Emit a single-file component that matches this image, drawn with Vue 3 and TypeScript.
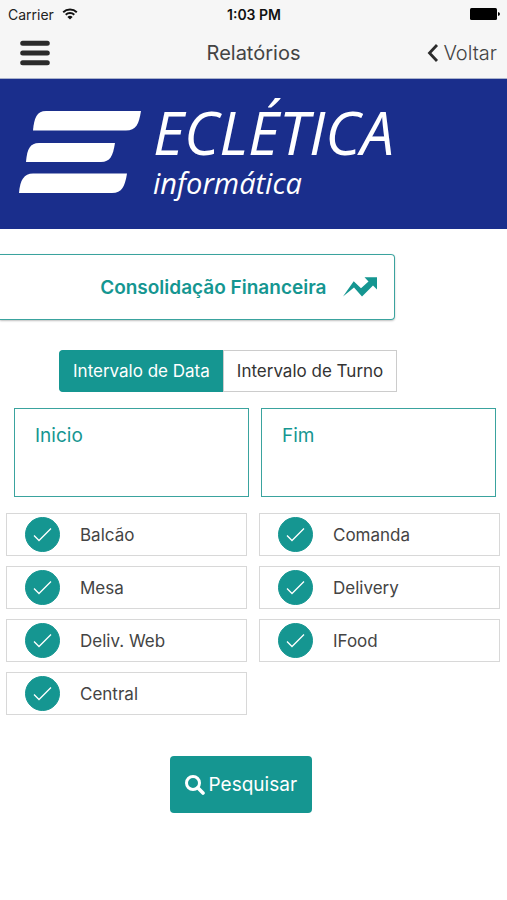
<script setup lang="ts">
import { ref } from 'vue'

interface Channel {
  id: string
  label: string
  checked: boolean
}

type Mode = 'data' | 'turno'

const mode = ref<Mode>('data')
const start = ref('')
const end = ref('')

const channels = ref<Channel[]>([
  { id: 'balcao', label: 'Balcão', checked: true },
  { id: 'comanda', label: 'Comanda', checked: true },
  { id: 'mesa', label: 'Mesa', checked: true },
  { id: 'delivery', label: 'Delivery', checked: true },
  { id: 'web', label: 'Deliv. Web', checked: true },
  { id: 'ifood', label: 'IFood', checked: true },
  { id: 'central', label: 'Central', checked: true },
])
</script>

<template>
  <div class="app">
    <header class="top">
      <div class="status">
        <span class="carrier">
          Carrier
          <svg class="wifi" viewBox="0 0 16 12" aria-hidden="true">
            <path d="M1.2 4.2a9.8 9.8 0 0 1 13.6 0M3.7 6.8a6.2 6.2 0 0 1 8.6 0" fill="none" stroke="#111" stroke-width="1.9" />
            <path d="M5.4 8.9a3.8 3.8 0 0 1 5.2 0L8 11.6z" fill="#111" />
          </svg>
        </span>
        <span class="clock">1:03 PM</span>
        <svg class="battery" viewBox="0 0 30 12" aria-hidden="true">
          <rect x="0" y="0" width="27" height="12" rx="1.5" fill="#000" />
          <path d="M28 4q2 .4 2 2t-2 2z" fill="#000" />
        </svg>
      </div>
      <nav class="bar">
        <button class="menu" type="button" aria-label="Menu">
          <svg viewBox="0 0 30 26" aria-hidden="true">
            <path d="M2.7 3.3h24.6M2.7 13h24.6M2.7 22.7h24.6" stroke="#2b2b2b" stroke-width="5" stroke-linecap="round" />
          </svg>
        </button>
        <h1 class="title">Relatórios</h1>
        <a class="back" href="#">
          <svg viewBox="0 0 12 20" aria-hidden="true">
            <path d="M10 2 2.5 10l7.500 8" fill="none" stroke="#2b2b2b" stroke-width="2.800" />
          </svg>
          Voltar
        </a>
      </nav>
    </header>

    <div class="banner">
      <svg class="mark" viewBox="0 0 122 84" aria-hidden="true">
        <g fill="#fff">
          <path d="M14 20.500C15 8 18 1 27 1H122C120 14 117 20.500 107 20.500Z" />
          <path d="M7 52C8 39 11 33 20 33H96C94 46 91 52 82 52Z" />
          <path d="M0 83C1 70 5 63.500 14 63.500H108C106 76 103 83 93 83Z" />
        </g>
      </svg>
      <div class="brand">
        <span class="name">ECLÉTICA</span>
        <span class="sub">informática</span>
      </div>
    </div>

    <main>
      <h2 class="report">
        Consolidação Financeira
        <svg viewBox="0 0 34 20" aria-hidden="true">
          <path d="M0 19.500 10.700 4.200 18 11.200 25.500 4.500 21.500 .2H34V12.500L30 8.500 19 19.500 11 10.500Z" fill="#159691" />
        </svg>
      </h2>

      <div class="modes">
        <div class="segment" role="group" aria-label="Intervalo">
          <button type="button" :class="{ on: mode === 'data' }" :aria-pressed="mode === 'data'" @click="mode = 'data'">Intervalo de Data</button>
          <button type="button" :class="{ on: mode === 'turno' }" :aria-pressed="mode === 'turno'" @click="mode = 'turno'">Intervalo de Turno</button>
        </div>
      </div>

      <div class="range">
        <div class="field">
          <label for="inicio">Inicio</label>
          <input id="inicio" v-model="start" type="text" />
        </div>
        <div class="field">
          <label for="fim">Fim</label>
          <input id="fim" v-model="end" type="text" />
        </div>
      </div>

      <div class="channels">
        <label v-for="c in channels" :key="c.id" class="channel" :for="c.id">
          <span class="tick">
            <input :id="c.id" v-model="c.checked" type="checkbox" />
            <svg viewBox="0 0 35 35" aria-hidden="true">
              <path d="M9 18.500 14 23.500 26 11.500" fill="none" stroke="#fff" stroke-width="1.300" />
            </svg>
          </span>
          {{ c.label }}
        </label>
      </div>

      <div class="actions">
        <button class="search" type="button">
          <svg viewBox="0 0 20 20" aria-hidden="true">
            <circle cx="8" cy="8" r="6.500" fill="none" stroke="#fff" stroke-width="3" />
            <path d="M12.800 12.800 18 18" stroke="#fff" stroke-width="3.600" stroke-linecap="round" />
          </svg>
          Pesquisar
        </button>
      </div>
    </main>
  </div>
</template>

<style>
body {
  background: #fff;
}
</style>

<style scoped>
.app {
  font-family: Inter, Roboto, "Liberation Sans", sans-serif;
  color: #444;
}

.app * {
  box-sizing: border-box;
}

svg {
  display: block;
  flex: none;
}

button,
input {
  font: inherit;
  margin: 0;
}

.top {
  background: #f6f6f6;
  border-bottom: 1px solid #a9b2cc;
}

.status {
  display: grid;
  grid-template-columns: 1fr auto 1fr;
  align-items: center;
  height: 28px;
  padding: 0 7px 0 8px;
  font-size: 14px;
  color: #222;
}

.carrier {
  display: flex;
  align-items: center;
  gap: 8px;
}

.wifi {
  width: 16px;
  height: 12px;
}

.clock {
  font-weight: 600;
  color: #111;
}

.battery {
  justify-self: end;
  width: 30px;
  height: 12px;
}

.bar {
  display: grid;
  grid-template-columns: 1fr auto 1fr;
  align-items: center;
  height: 50px;
  padding: 0 10px;
}

.menu {
  justify-self: start;
  padding: 0 10px;
  border: 0;
  background: none;
}

.menu svg {
  width: 30px;
  height: 26px;
}

.title {
  margin: 0;
  font-size: 20px;
  line-height: 26px;
  font-weight: 400;
  color: #444;
}

.back {
  justify-self: end;
  display: flex;
  align-items: center;
  gap: 4px;
  font-size: 20px;
  line-height: 26px;
  font-weight: 300;
  color: #444;
  text-decoration: none;
}

.back svg {
  width: 12px;
  height: 20px;
}

.banner {
  display: flex;
  align-items: flex-start;
  gap: 12px;
  height: 150px;
  padding: 18px 19px 0;
  background: #1a2e8c;
  color: #fff;
}

.mark {
  width: 122px;
  height: 84px;
  margin-top: 13px;
}

.brand {
  display: flex;
  flex-direction: column;
  font-family: "Open Sans", "Noto Sans", sans-serif;
  font-style: italic;
}

.name {
  font-size: 60px;
  line-height: 70px;
}

.sub {
  font-size: 29px;
  line-height: 32px;
}

.report {
  display: flex;
  align-items: center;
  justify-content: flex-end;
  gap: 17px;
  width: 78%;
  height: 66px;
  margin: 25px 0 0;
  padding-right: 17px;
  border: 1px solid #3aa39e;
  border-left: 0;
  border-radius: 0 4px 4px 0;
  box-shadow: 0 1px 2px rgba(0, 0, 0, 0.25);
  font-size: 19px;
  font-weight: 600;
  color: #159691;
}

.report svg {
  width: 34px;
  height: 20px;
}

.modes {
  display: flex;
  justify-content: center;
  width: 90%;
  margin-top: 30px;
}

.segment {
  display: flex;
}

.segment button {
  height: 42px;
  padding: 0 13px;
  border: 1px solid #ccc;
  background: #fff;
  font-size: 17px;
  color: #333;
}

.segment button:first-child {
  border-right: 0;
  border-radius: 4px 0 0 4px;
}

.segment button.on {
  border-color: #159691;
  background: #159691;
  color: #fff;
}

.range {
  display: grid;
  grid-template-columns: 1fr 1fr;
  gap: 12px;
  margin-top: 16px;
  padding: 0 11px 0 14px;
}

.field {
  display: flex;
  flex-direction: column;
  height: 89px;
  padding: 14px 20px;
  border: 1px solid #3aa39e;
  font-size: 19px;
  line-height: 26px;
  color: #159691;
}

.field input {
  width: 100%;
  height: 32px;
  padding: 0;
  border: 0;
  outline: 0;
  background: none;
  color: inherit;
}

.channels {
  display: grid;
  grid-template-columns: 1fr 1fr;
  gap: 10px 12px;
  margin-top: 16px;
  padding: 0 7px 0 6px;
}

.channel {
  display: flex;
  align-items: center;
  gap: 20px;
  height: 43px;
  padding-left: 18px;
  border: 1px solid #d8d8d8;
  font-size: 17px;
}

.tick {
  display: grid;
}

.tick input,
.tick svg {
  grid-area: 1 / 1;
  width: 35px;
  height: 35px;
}

.tick input {
  appearance: none;
  border: 1px solid #159691;
  border-radius: 50%;
}

.tick input:checked {
  background: #159691;
}

.tick svg {
  pointer-events: none;
}

.actions {
  display: flex;
  justify-content: center;
  width: 95%;
  padding: 41px 0;
}

.search {
  display: flex;
  align-items: center;
  gap: 4px;
  height: 57px;
  padding: 0 15px;
  border: 0;
  border-radius: 4px;
  background: #159691;
  font-size: 19px;
  color: #fff;
}

.search svg {
  width: 20px;
  height: 20px;
}
</style>
